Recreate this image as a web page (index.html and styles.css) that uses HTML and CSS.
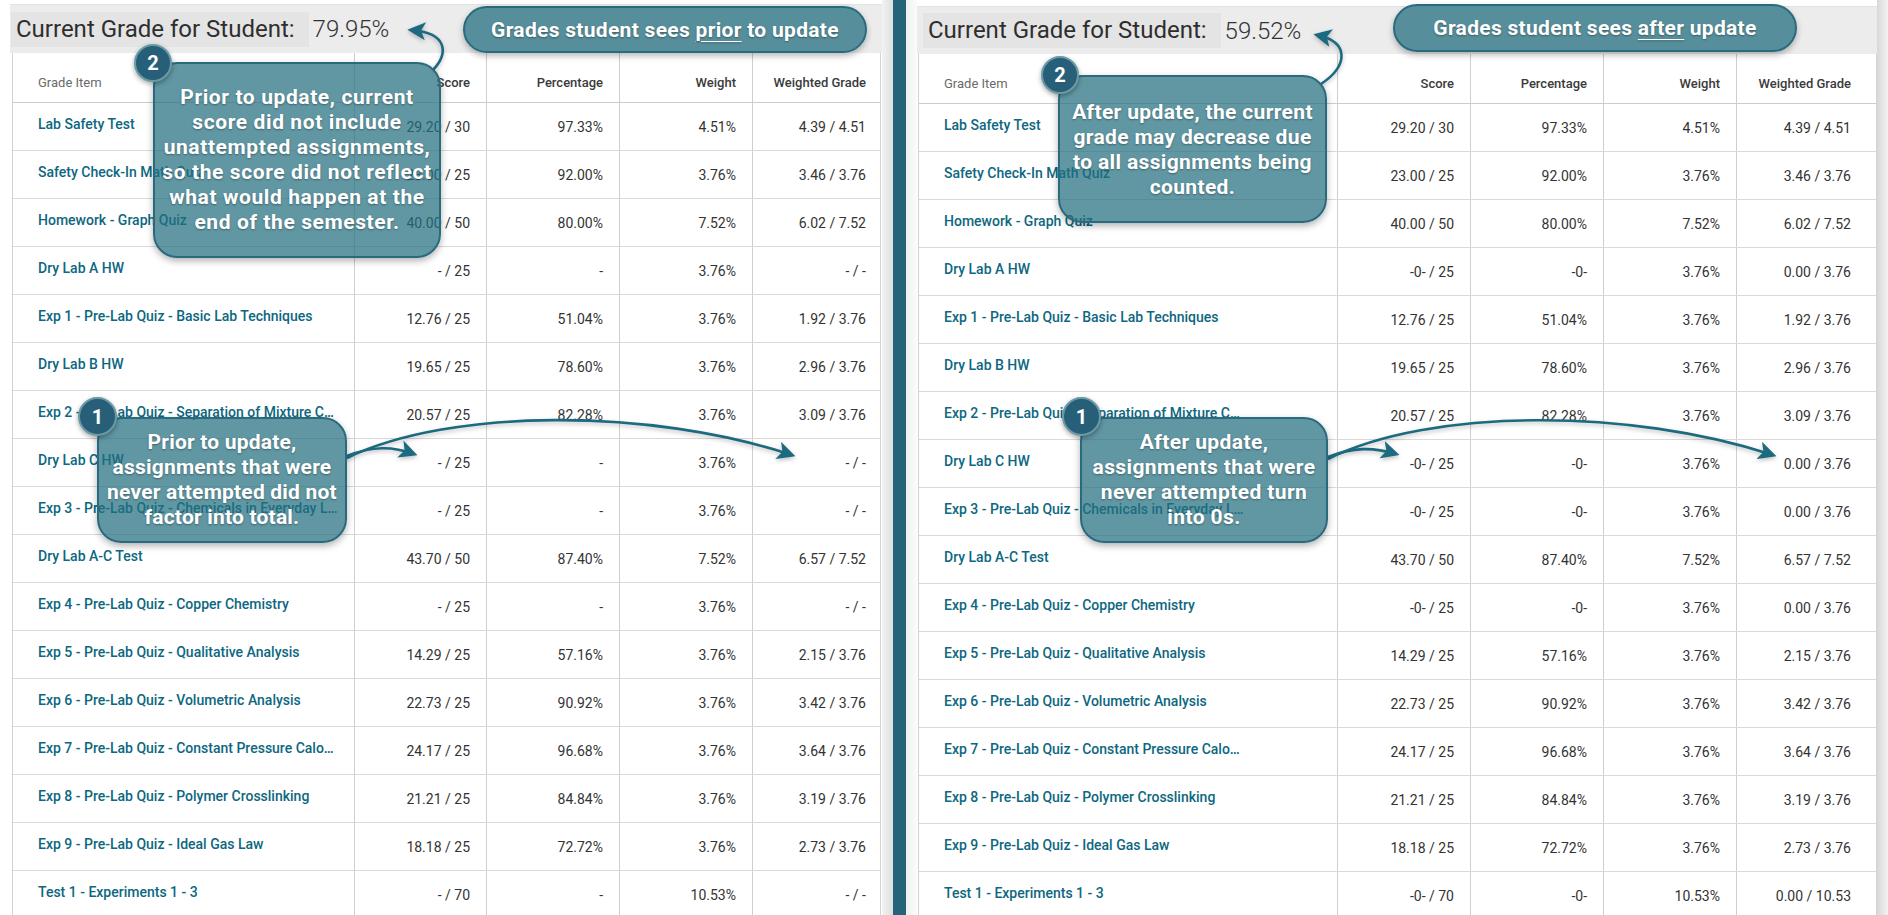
FILE: index.html
```html
<!DOCTYPE html>
<html lang="en">
<head>
<meta charset="utf-8">
<title>Grades before and after update</title>
<link rel="stylesheet" href="styles.css">
</head>
<body>
<div class="page">
  <div class="margin-left"></div>

  <section class="panel panel-left">
    <div class="grade-bar">
      <span class="grade-label">Current Grade for Student:</span>
      <span class="grade-value">79.95%</span>
    </div>
    <div class="grid grid-left">
      <div class="row head">
        <div class="cell name">Grade Item</div><div class="cell">Score</div><div class="cell">Percentage</div><div class="cell">Weight</div><div class="cell">Weighted Grade</div>
      </div>
      <div class="row"><div class="cell name"><a>Lab Safety Test</a></div><div class="cell">29.20 / 30</div><div class="cell">97.33%</div><div class="cell">4.51%</div><div class="cell">4.39 / 4.51</div></div>
      <div class="row"><div class="cell name"><a>Safety Check-In Math Quiz</a></div><div class="cell">23.00 / 25</div><div class="cell">92.00%</div><div class="cell">3.76%</div><div class="cell">3.46 / 3.76</div></div>
      <div class="row"><div class="cell name"><a>Homework - Graph Quiz</a></div><div class="cell">40.00 / 50</div><div class="cell">80.00%</div><div class="cell">7.52%</div><div class="cell">6.02 / 7.52</div></div>
      <div class="row"><div class="cell name"><a>Dry Lab A HW</a></div><div class="cell">- / 25</div><div class="cell">-</div><div class="cell">3.76%</div><div class="cell">- / -</div></div>
      <div class="row"><div class="cell name"><a>Exp 1 - Pre-Lab Quiz - Basic Lab Techniques</a></div><div class="cell">12.76 / 25</div><div class="cell">51.04%</div><div class="cell">3.76%</div><div class="cell">1.92 / 3.76</div></div>
      <div class="row"><div class="cell name"><a>Dry Lab B HW</a></div><div class="cell">19.65 / 25</div><div class="cell">78.60%</div><div class="cell">3.76%</div><div class="cell">2.96 / 3.76</div></div>
      <div class="row"><div class="cell name"><a>Exp 2 - Pre-Lab Quiz - Separation of Mixture C…</a></div><div class="cell">20.57 / 25</div><div class="cell">82.28%</div><div class="cell">3.76%</div><div class="cell">3.09 / 3.76</div></div>
      <div class="row"><div class="cell name"><a>Dry Lab C HW</a></div><div class="cell">- / 25</div><div class="cell">-</div><div class="cell">3.76%</div><div class="cell">- / -</div></div>
      <div class="row"><div class="cell name"><a>Exp 3 - Pre-Lab Quiz - Chemicals in Everyday L…</a></div><div class="cell">- / 25</div><div class="cell">-</div><div class="cell">3.76%</div><div class="cell">- / -</div></div>
      <div class="row"><div class="cell name"><a>Dry Lab A-C Test</a></div><div class="cell">43.70 / 50</div><div class="cell">87.40%</div><div class="cell">7.52%</div><div class="cell">6.57 / 7.52</div></div>
      <div class="row"><div class="cell name"><a>Exp 4 - Pre-Lab Quiz - Copper Chemistry</a></div><div class="cell">- / 25</div><div class="cell">-</div><div class="cell">3.76%</div><div class="cell">- / -</div></div>
      <div class="row"><div class="cell name"><a>Exp 5 - Pre-Lab Quiz - Qualitative Analysis</a></div><div class="cell">14.29 / 25</div><div class="cell">57.16%</div><div class="cell">3.76%</div><div class="cell">2.15 / 3.76</div></div>
      <div class="row"><div class="cell name"><a>Exp 6 - Pre-Lab Quiz - Volumetric Analysis</a></div><div class="cell">22.73 / 25</div><div class="cell">90.92%</div><div class="cell">3.76%</div><div class="cell">3.42 / 3.76</div></div>
      <div class="row"><div class="cell name"><a>Exp 7 - Pre-Lab Quiz - Constant Pressure Calo…</a></div><div class="cell">24.17 / 25</div><div class="cell">96.68%</div><div class="cell">3.76%</div><div class="cell">3.64 / 3.76</div></div>
      <div class="row"><div class="cell name"><a>Exp 8 - Pre-Lab Quiz - Polymer Crosslinking</a></div><div class="cell">21.21 / 25</div><div class="cell">84.84%</div><div class="cell">3.76%</div><div class="cell">3.19 / 3.76</div></div>
      <div class="row"><div class="cell name"><a>Exp 9 - Pre-Lab Quiz - Ideal Gas Law</a></div><div class="cell">18.18 / 25</div><div class="cell">72.72%</div><div class="cell">3.76%</div><div class="cell">2.73 / 3.76</div></div>
      <div class="row"><div class="cell name"><a>Test 1 - Experiments 1 - 3</a></div><div class="cell">- / 70</div><div class="cell">-</div><div class="cell">10.53%</div><div class="cell">- / -</div></div>
    </div>
  </section>

  <div class="gap-shadow"></div>
  <div class="divider-bar"></div>
  <div class="gap-light"></div>

  <section class="panel panel-right">
    <div class="grade-bar">
      <span class="grade-label">Current Grade for Student:</span>
      <span class="grade-value">59.52%</span>
    </div>
    <div class="grid grid-right">
      <div class="row head">
        <div class="cell name">Grade Item</div><div class="cell">Score</div><div class="cell">Percentage</div><div class="cell">Weight</div><div class="cell">Weighted Grade</div>
      </div>
      <div class="row"><div class="cell name"><a>Lab Safety Test</a></div><div class="cell">29.20 / 30</div><div class="cell">97.33%</div><div class="cell">4.51%</div><div class="cell">4.39 / 4.51</div></div>
      <div class="row"><div class="cell name"><a>Safety Check-In Math Quiz</a></div><div class="cell">23.00 / 25</div><div class="cell">92.00%</div><div class="cell">3.76%</div><div class="cell">3.46 / 3.76</div></div>
      <div class="row"><div class="cell name"><a>Homework - Graph Quiz</a></div><div class="cell">40.00 / 50</div><div class="cell">80.00%</div><div class="cell">7.52%</div><div class="cell">6.02 / 7.52</div></div>
      <div class="row"><div class="cell name"><a>Dry Lab A HW</a></div><div class="cell">-0- / 25</div><div class="cell">-0-</div><div class="cell">3.76%</div><div class="cell">0.00 / 3.76</div></div>
      <div class="row"><div class="cell name"><a>Exp 1 - Pre-Lab Quiz - Basic Lab Techniques</a></div><div class="cell">12.76 / 25</div><div class="cell">51.04%</div><div class="cell">3.76%</div><div class="cell">1.92 / 3.76</div></div>
      <div class="row"><div class="cell name"><a>Dry Lab B HW</a></div><div class="cell">19.65 / 25</div><div class="cell">78.60%</div><div class="cell">3.76%</div><div class="cell">2.96 / 3.76</div></div>
      <div class="row"><div class="cell name"><a>Exp 2 - Pre-Lab Quiz - Separation of Mixture C…</a></div><div class="cell">20.57 / 25</div><div class="cell">82.28%</div><div class="cell">3.76%</div><div class="cell">3.09 / 3.76</div></div>
      <div class="row"><div class="cell name"><a>Dry Lab C HW</a></div><div class="cell">-0- / 25</div><div class="cell">-0-</div><div class="cell">3.76%</div><div class="cell">0.00 / 3.76</div></div>
      <div class="row"><div class="cell name"><a>Exp 3 - Pre-Lab Quiz - Chemicals in Everyday L…</a></div><div class="cell">-0- / 25</div><div class="cell">-0-</div><div class="cell">3.76%</div><div class="cell">0.00 / 3.76</div></div>
      <div class="row"><div class="cell name"><a>Dry Lab A-C Test</a></div><div class="cell">43.70 / 50</div><div class="cell">87.40%</div><div class="cell">7.52%</div><div class="cell">6.57 / 7.52</div></div>
      <div class="row"><div class="cell name"><a>Exp 4 - Pre-Lab Quiz - Copper Chemistry</a></div><div class="cell">-0- / 25</div><div class="cell">-0-</div><div class="cell">3.76%</div><div class="cell">0.00 / 3.76</div></div>
      <div class="row"><div class="cell name"><a>Exp 5 - Pre-Lab Quiz - Qualitative Analysis</a></div><div class="cell">14.29 / 25</div><div class="cell">57.16%</div><div class="cell">3.76%</div><div class="cell">2.15 / 3.76</div></div>
      <div class="row"><div class="cell name"><a>Exp 6 - Pre-Lab Quiz - Volumetric Analysis</a></div><div class="cell">22.73 / 25</div><div class="cell">90.92%</div><div class="cell">3.76%</div><div class="cell">3.42 / 3.76</div></div>
      <div class="row"><div class="cell name"><a>Exp 7 - Pre-Lab Quiz - Constant Pressure Calo…</a></div><div class="cell">24.17 / 25</div><div class="cell">96.68%</div><div class="cell">3.76%</div><div class="cell">3.64 / 3.76</div></div>
      <div class="row"><div class="cell name"><a>Exp 8 - Pre-Lab Quiz - Polymer Crosslinking</a></div><div class="cell">21.21 / 25</div><div class="cell">84.84%</div><div class="cell">3.76%</div><div class="cell">3.19 / 3.76</div></div>
      <div class="row"><div class="cell name"><a>Exp 9 - Pre-Lab Quiz - Ideal Gas Law</a></div><div class="cell">18.18 / 25</div><div class="cell">72.72%</div><div class="cell">3.76%</div><div class="cell">2.73 / 3.76</div></div>
      <div class="row"><div class="cell name"><a>Test 1 - Experiments 1 - 3</a></div><div class="cell">-0- / 70</div><div class="cell">-0-</div><div class="cell">10.53%</div><div class="cell">0.00 / 10.53</div></div>
    </div>
  </section>

  <div class="edge-shadow"></div>
</div>

<svg class="arrows" width="1888" height="915" viewBox="0 0 1888 915" aria-hidden="true">
  <defs>
    <marker id="head" viewBox="0 0 10 10" refX="8" refY="5" markerWidth="7" markerHeight="7" markerUnits="strokeWidth" orient="auto">
      <path d="M0 0 L10 5 L0 10 L2.5 5 Z" fill="#1c6a80"/>
    </marker>
  </defs>
  <path class="arrow" d="M433 70 C448 54, 449 33, 411 30"/>
  <path class="arrow" d="M1321 84 C1348 66, 1350 42, 1317 35"/>
  <path class="arrow" d="M347 456 C372 446, 392 446, 414 454"/>
  <path class="arrow" d="M347 458 C450 408, 650 408, 792 455"/>
  <path class="arrow" d="M1328 457 C1353 447, 1373 447, 1396 454"/>
  <path class="arrow" d="M1328 459 C1430 408, 1630 408, 1773 455"/>
</svg>

<div class="banner banner-left"><span>Grades student sees <u>prior</u> to update</span></div>
<div class="banner banner-right"><span>Grades student sees <u>after</u> update</span></div>

<div class="callout callout-l2"><span>Prior to update, current<br>score did not include<br>unattempted assignments,<br>so the score did not reflect<br>what would happen at the<br>end of the semester.</span></div>
<div class="badge badge-l2">2</div>

<div class="callout callout-r2"><span>After update, the current<br>grade may decrease due<br>to all assignments being<br>counted.</span></div>
<div class="badge badge-r2">2</div>

<div class="callout callout-l1"><span>Prior to update,<br>assignments that were<br>never attempted did not<br>factor into total.</span></div>
<div class="badge badge-l1">1</div>

<div class="callout callout-r1"><span>After update,<br>assignments that were<br>never attempted turn<br>into 0s.</span></div>
<div class="badge badge-r1">1</div>
</body>
</html>
```

FILE: styles.css
```css
* { box-sizing: border-box; }

body {
  margin: 0;
  width: 1888px;
  height: 915px;
  overflow: hidden;
  position: relative;
  background: #ffffff;
  font-family: Roboto, "Liberation Sans", Arial, sans-serif;
  color: #333333;
}

.page {
  display: flex;
  height: 915px;
}

.margin-left { width: 10px; flex: none; }

.panel { flex: none; }
.panel-left { width: 872px; padding-top: 4px; }
.panel-right { width: 960px; padding-top: 6px; }

.gap-shadow {
  width: 11px;
  flex: none;
  background: linear-gradient(to right, #f3f3f3, #dedede);
}
.divider-bar {
  width: 13px;
  flex: none;
  background: #25637a;
}
.gap-light {
  width: 11px;
  flex: none;
  background: linear-gradient(to right, #eef0f0, #fbfbfb);
}
.edge-shadow {
  width: 11px;
  flex: none;
  background: linear-gradient(to right, #d8d8d8, #f2f2f2);
}

/* grade summary bar */
.grade-bar {
  display: flex;
  align-items: center;
  background: #ececec;
  border-top: 1px solid #e2e2e2;
}
.panel-left .grade-bar { height: 49px; padding-left: 1px; }
.panel-right .grade-bar { height: 48px; padding-left: 6px; }

.grade-label {
  background: #e4e4e4;
  font-size: 24px;
  line-height: 35px;
  height: 35px;
  padding: 0 14px 0 5px;
  color: #2e2e2e;
}
.grade-value {
  margin-left: 4px;
  font-size: 24px;
  font-weight: 300;
  color: #333333;
}

/* grade grid */
.grid {
  background: #ffffff;
  border-left: 1px solid #d2d2d2;
  border-right: 1px solid #d2d2d2;
}
.grid-left { margin-left: 2px; width: 869px; }
.grid-right { margin-left: 1px; width: 959px; }

.row {
  display: grid;
  height: 48px;
  border-bottom: 1px solid #d9d9d9;
}
.row.head {
  height: 50px;
  border-bottom-color: #cccccc;
}
.grid-left .row { grid-template-columns: 341px 132px 133px 133px 1fr; }
.grid-right .row { grid-template-columns: 418px 133px 133px 133px 1fr; }

.cell {
  display: flex;
  align-items: center;
  justify-content: flex-end;
  padding-right: 16px;
  border-left: 1px solid #cfcfcf;
  font-size: 14px;
  color: #333333;
  white-space: nowrap;
  overflow: hidden;
}
.cell.name {
  justify-content: flex-start;
  padding-left: 25px;
  padding-bottom: 5px;
  border-left: none;
}
.grid-left .cell:last-child { padding-right: 14px; }
.grid-right .cell:last-child { padding-right: 25px; }

.cell a {
  color: #0d6780;
  font-weight: 500;
  text-decoration: none;
}

.row.head .cell {
  font-size: 13px;
  font-weight: 500;
  color: #3a3a3a;
  padding-top: 9px;
}
.row.head .cell.name {
  font-weight: 400;
  color: #6a6a6a;
  padding-bottom: 0;
}

/* overlays */
.arrows {
  position: absolute;
  left: 0;
  top: 0;
  pointer-events: none;
  filter: drop-shadow(0 2px 2px rgba(0, 0, 0, 0.25));
}
.arrow {
  fill: none;
  stroke: #1c6a80;
  stroke-width: 2.6;
  marker-end: url(#head);
}

.banner {
  position: absolute;
  height: 47px;
  width: 404px;
  border-radius: 24px;
  background: rgba(34, 111, 127, 0.74);
  border: 2px solid #2a6a7e;
  box-shadow: 0 3px 6px rgba(0, 0, 0, 0.28);
  color: #ffffff;
  font-weight: 700;
  font-size: 21px;
  letter-spacing: 0.3px;
  display: flex;
  align-items: center;
  justify-content: center;
  text-shadow: 0 1px 2px rgba(0, 0, 0, 0.35);
}
.banner u { text-underline-offset: 4px; text-decoration-thickness: 1px; }
.banner-left { left: 463px; top: 6px; }
.banner-right { left: 1393px; top: 4px; height: 48px; }

.callout {
  position: absolute;
  background: rgba(34, 111, 127, 0.72);
  border: 2px solid #2a6a7e;
  border-radius: 24px;
  box-shadow: 0 3px 7px rgba(0, 0, 0, 0.3);
  color: #ffffff;
  font-weight: 700;
  font-size: 21px;
  line-height: 25px;
  text-align: center;
  display: flex;
  align-items: center;
  justify-content: center;
  white-space: nowrap;
  text-shadow: 0 1px 2px rgba(0, 0, 0, 0.35);
}
.callout-l2 { left: 153px; top: 62px; width: 288px; height: 196px; letter-spacing: 0.6px; }
.callout-r2 { left: 1058px; top: 75px; width: 269px; height: 148px; letter-spacing: 0.35px; padding-top: 2px; }
.callout-l1 { left: 97px; top: 417px; width: 250px; height: 126px; letter-spacing: 0.2px; }
.callout-r1 { left: 1080px; top: 417px; width: 248px; height: 126px; letter-spacing: 0.4px; }

.badge {
  position: absolute;
  width: 38px;
  height: 38px;
  border-radius: 50%;
  background: #265f77;
  border: 2px solid #6b9aa7;
  box-shadow: 0 2px 5px rgba(0, 0, 0, 0.35);
  color: #ffffff;
  font-weight: 700;
  font-size: 20px;
  display: flex;
  align-items: center;
  justify-content: center;
}
.badge-l2 { left: 134px; top: 44px; }
.badge-r2 { left: 1041px; top: 56px; }
.badge-l1 { left: 78px; top: 397px; width: 39px; height: 39px; }
.badge-r1 { left: 1062px; top: 397px; width: 39px; height: 39px; }
```
